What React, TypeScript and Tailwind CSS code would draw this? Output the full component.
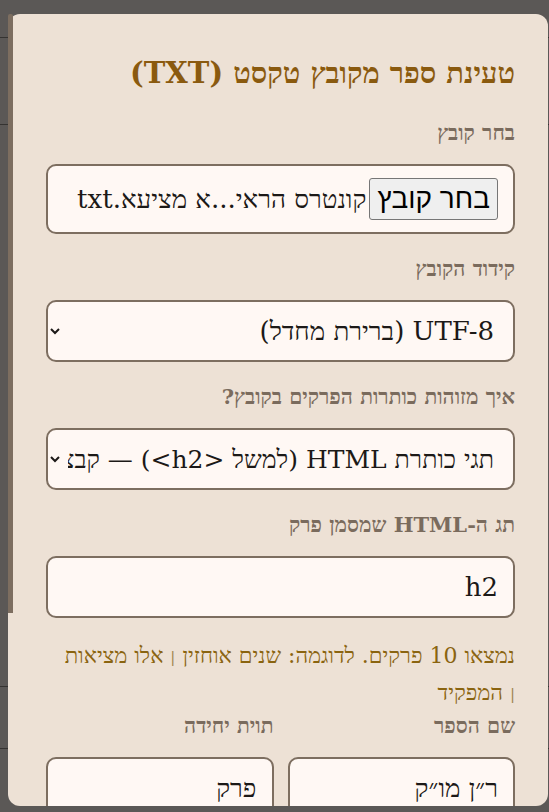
import React from "react";

const labelCls =
  "block text-[21px] leading-[28px] font-bold text-[#7a6b5d] mb-[17px]";
const boxBase =
  "block w-full rounded-[10px] border-2 border-[#7d6e60] bg-[#fff8f4] pr-[15px] text-[#1c1917] font-['DejaVu_Serif','Liberation_Serif',serif] outline-none";
const boxCls = boxBase + " pl-[15px] text-[26px]";

const Sep = () => (
  <span className="inline-block align-[1px] text-[15px] text-[#a08450]">|</span>
);

export default function App() {
  return (
    <div className="relative h-[812px] w-[549px] overflow-hidden bg-[#5b5856] font-['DejaVu_Serif','Liberation_Serif',serif]">
      {/* page behind the overlay */}
      <div className="flex flex-col">
        <div className="h-[38px] border-b border-[#353331]" />
        <div className="h-[87px] border-b border-[#353331]" />
        <div className="h-[562px] border-b border-[#353331]" />
        <div className="h-[62px] border-b border-[#353331]" />
      </div>

      {/* modal */}
      <div
        dir="rtl"
        className="absolute left-[8px] top-[14px] h-[792px] w-[540px] overflow-hidden rounded-[12px] bg-[#ede1d5] pt-[41px] pr-[33px] pl-[38px]"
      >
        <h2 className="mb-[28px] text-[29px] leading-[36px] font-bold text-[#8a5a0f]">
          טעינת ספר מקובץ טקסט (TXT)
        </h2>

        <div className="mb-[21px]">
          <label className={labelCls}>בחר קובץ</label>
          <div className={boxCls + " flex h-[70px] items-center gap-[3px]"}>
            <span className="rounded-[3px] border border-[#767676] bg-[#efefef] px-[7px] font-['Liberation_Sans',sans-serif] text-[28px] leading-[40px] text-black">
              בחר קובץ
            </span>
            <span className="whitespace-nowrap">קונטרס הראי...א מציעא.txt</span>
          </div>
        </div>

        <div className="mb-[21px]">
          <label className={labelCls}>קידוד הקובץ</label>
          <select className={boxCls + " h-[62px]"} defaultValue="utf8">
            <option value="utf8">UTF-8 (ברירת מחדל)</option>
            <option value="win">Windows-1255</option>
          </select>
        </div>

        <div className="mb-[21px]">
          <label className={labelCls}>איך מזוהות כותרות הפרקים בקובץ?</label>
          <select className={boxBase + " h-[62px] pl-[4px] text-[25px]"} defaultValue="html">
            <option value="html">
              תגי כותרת HTML (למשל &lt;h2&gt;) — קבצים שהומרו מאתר אינטרנט
            </option>
            <option value="line">שורה המתחילה במילה מסוימת</option>
          </select>
        </div>

        <div className="mb-[20px]">
          <label className={labelCls}>תג ה-HTML שמסמן פרק</label>
          <input className={boxCls + " h-[62px]"} defaultValue="h2" />
        </div>

        <p className="text-[22px] leading-[35px] text-[#8a6410]">
          נמצאו 10 פרקים. לדוגמה: שנים אוחזין <Sep /> אלו מציאות{" "}
          <span className="whitespace-nowrap">
            <Sep /> המפקיד
          </span>
        </p>

        <div className="grid grid-cols-2 gap-x-[14px]">
          <div>
            <label className={labelCls}>שם הספר</label>
            <input className={boxCls + " h-[62px]"} defaultValue="ר״ן מו״ק" />
          </div>
          <div>
            <label className={labelCls}>תוית יחידה</label>
            <input className={boxCls + " h-[62px]"} defaultValue="פרק" />
          </div>
        </div>
      </div>

      {/* modal scrollbar thumb (RTL scrollbar sits on the left) */}
      <div className="absolute left-[8px] top-[14px] h-[599px] w-[5px] rounded-t-[2px] bg-[#7d6e60]" />
    </div>
  );
}
